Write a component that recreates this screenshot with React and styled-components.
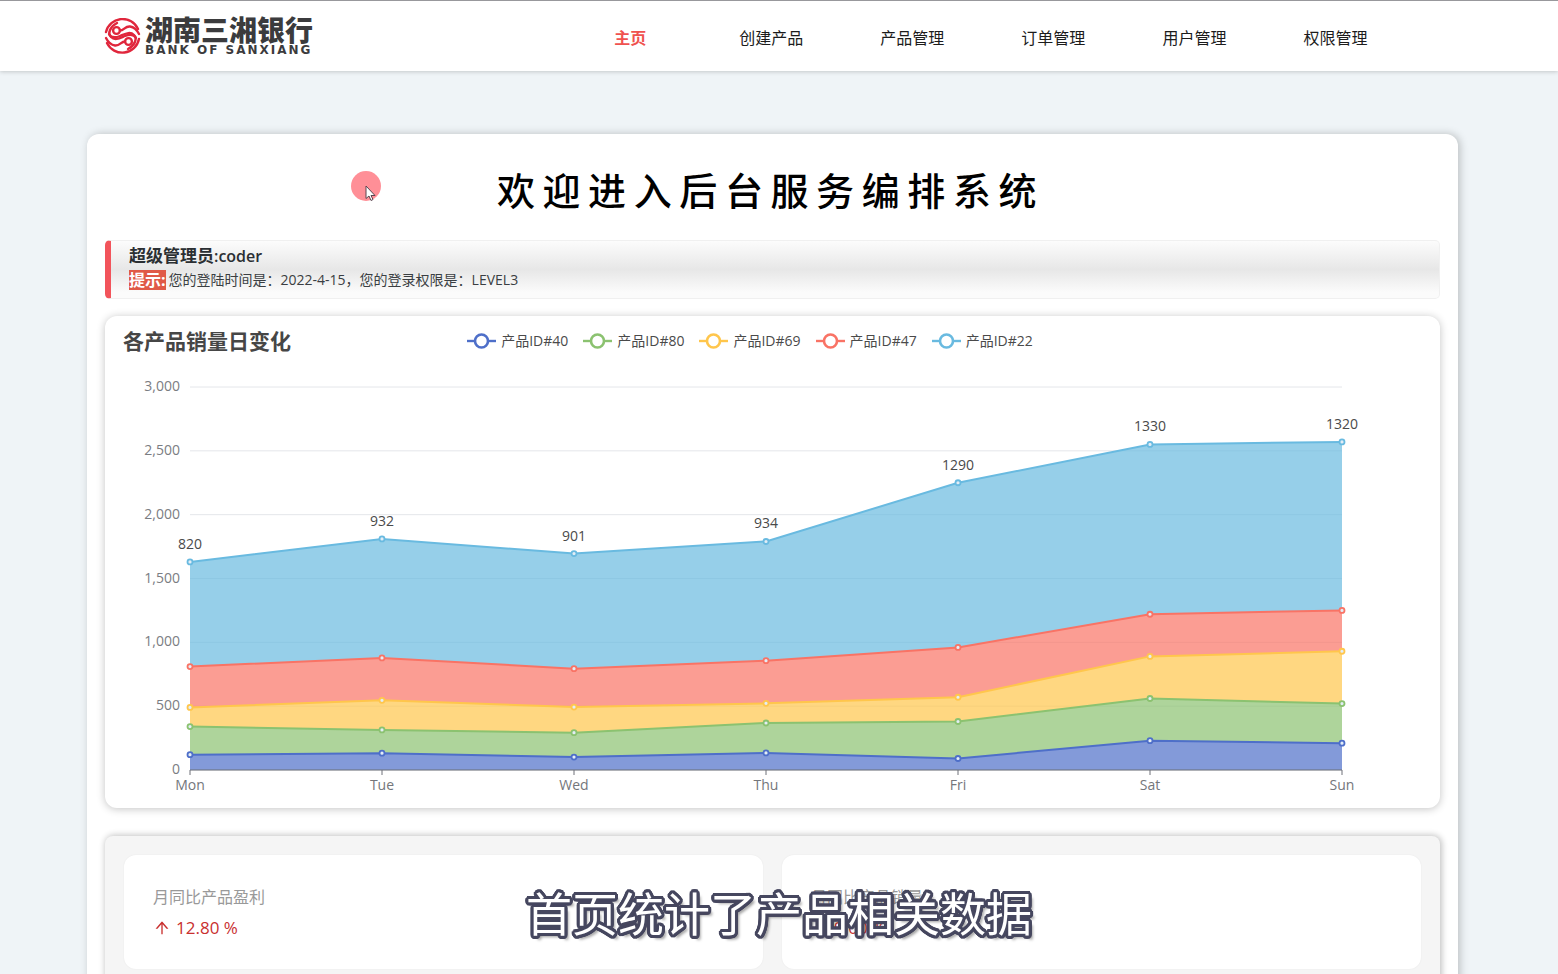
import React, { useLayoutEffect, useRef, useState } from 'react';
import styled, { createGlobalStyle } from 'styled-components';
import { AiOutlineArrowUp } from 'react-icons/ai';

const GlobalStyle = createGlobalStyle`
    * {
        box-sizing: border-box;
    }

    body {
        margin: 0;
        background-color: #eff4f7;
        font-family: 'Open Sans', 'Noto Sans CJK SC', sans-serif;
        font-size: 14px;
        color: #333;
    }
`;

const Page = styled.div`
    height: 100vh;
    overflow-y: auto;
    scrollbar-width: none;
`;

const Header = styled.header`
    display: flex;
    align-items: center;
    justify-content: space-between;
    height: 71px;
    padding: 0 152px 0 104px;
    border-top: 1px solid #98989c;
    background-color: #fff;
    box-shadow: 0 1px 4px rgba(0, 0, 0, 0.18);
`;

const Logo = styled.a`
    display: flex;
    align-items: center;
    gap: 4px;
    color: #3b3b3d;
    text-decoration: none;
`;

const LogoText = styled.span`
    display: flex;
    flex-direction: column;
`;

const LogoName = styled.span`
    font-size: 28px;
    line-height: 28px;
    font-weight: 900;
`;

const LogoSub = styled.span`
    font-family: 'DejaVu Sans', sans-serif;
    font-size: 12px;
    line-height: 12px;
    font-weight: 700;
    letter-spacing: 2px;
    white-space: nowrap;
`;

const Nav = styled.nav`
    display: grid;
    grid-template-columns: repeat(6, 1fr);
    width: 65%;
    padding-top: 3px;
`;

const NavLink = styled.a`
    font-size: 16px;
    line-height: 24px;
    text-align: center;
    text-decoration: none;
    color: ${(props) => (props.$active ? '#f0524f' : '#1c1c1c')};
    font-weight: ${(props) => (props.$active ? 700 : 400)};
`;

const Main = styled.main`
    margin: 63px 100px 40px 87px;
    padding: 28px 18px;
    border-radius: 12px;
    background-color: #fff;
    box-shadow: 2px 0 8px rgba(0, 0, 0, 0.22);
`;

const Title = styled.h1`
    margin: 0 4px 22px 0;
    font-size: 38px;
    line-height: 56px;
    font-weight: 500;
    letter-spacing: 0.2em;
    text-align: center;
    color: #000;
`;

const Notice = styled.section`
    padding: 3px 18px 6px;
    border: 1px solid #f0f0f0;
    border-left: 6px solid #f2545b;
    border-radius: 5px;
    background: linear-gradient(180deg, #fcfcfc 0%, #e7e7e7 50%, #fbfbfb 90%);
`;

const NoticeUser = styled.div`
    font-size: 17px;
    line-height: 24px;
    font-weight: 700;
    color: #2b2f33;

    span {
        font-size: 16px;
        font-weight: 600;
    }
`;

const NoticeTip = styled.div`
    display: flex;
    align-items: center;
    gap: 3px;
    line-height: 24px;
    color: #3a3e42;
`;

const Tag = styled.strong`
    font-size: 16px;
    line-height: 20px;
    color: #fff;
    background-color: #e05a47;
`;

const ChartCard = styled.section`
    margin-top: 17px;
    border-radius: 12px;
    background-color: #fff;
    box-shadow: 0 1px 8px rgba(0, 0, 0, 0.24);
`;

const ChartHead = styled.div`
    display: grid;
    grid-template-columns: 1fr auto 1fr;
    align-items: center;
    height: 50px;
    padding: 0 63px 0 18px;
`;

const ChartTitle = styled.h2`
    margin: 0;
    font-size: 21px;
    line-height: 28px;
    font-weight: 700;
    color: #464646;
`;

const Legend = styled.ul`
    display: flex;
    gap: 15px;
    margin: 0;
    padding: 0;
    list-style: none;
`;

const LegendItem = styled.li`
    display: flex;
    align-items: center;
    gap: 5px;
    line-height: 20px;
    color: #4a4a4a;
`;

const Plot = styled.svg`
    display: block;
    width: 100%;
    height: 442px;
    font-size: 14px;
`;

const Stats = styled.section`
    display: grid;
    grid-template-columns: 1fr 1fr;
    gap: 19px;
    margin-top: 28px;
    padding: 19px;
    border-radius: 8px;
    background-color: #f5f5f5;
    box-shadow: 1px 0 6px 1px rgba(0, 0, 0, 0.24);
`;

const StatCard = styled.div`
    height: 114px;
    padding: 30px 29px;
    border-radius: 12px;
    background-color: #fff;
    box-shadow: 0 0 2px rgba(0, 0, 0, 0.06);
`;

const StatLabel = styled.div`
    font-size: 16px;
    line-height: 24px;
    color: #999;
`;

const StatValue = styled.div`
    display: flex;
    align-items: center;
    gap: 5px;
    margin-top: 6px;
    font-size: 17px;
    line-height: 26px;
    color: #c9302f;
`;

// 3px outline with round corners, then a soft drop shadow
const OUTLINE = Array.from({ length: 24 }, (_, i) => {
    const a = (i * Math.PI) / 12;
    return `${(3 * Math.cos(a)).toFixed(2)}px ${(3 * Math.sin(a)).toFixed(2)}px 0 #46475f`;
}).join(', ');

const Caption = styled.div`
    position: fixed;
    left: 0;
    right: 0;
    bottom: 28px;
    font-size: 46px;
    line-height: 66px;
    text-align: center;
    color: #fff;
    text-shadow: ${OUTLINE}, 4px 4px 3px rgba(0, 0, 0, 0.4);
    pointer-events: none;
`;

const Pointer = styled.svg`
    position: fixed;
    left: 351px;
    top: 171px;
    width: 30px;
    height: 30px;
    pointer-events: none;
`;

const NAV = ['主页', '创建产品', '产品管理', '订单管理', '用户管理', '权限管理'];
const DAYS = ['Mon', 'Tue', 'Wed', 'Thu', 'Fri', 'Sat', 'Sun'];
const TICKS = [0, 500, 1000, 1500, 2000, 2500, 3000];

const SERIES = [
    { name: '产品ID#40', color: '#4e6fc9', data: [120, 132, 101, 134, 90, 230, 210] },
    { name: '产品ID#80', color: '#8bc270', data: [220, 182, 191, 234, 290, 330, 310] },
    { name: '产品ID#69', color: '#ffc64c', data: [150, 232, 201, 154, 190, 330, 410] },
    { name: '产品ID#47', color: '#f97365', data: [320, 332, 301, 334, 390, 330, 320] },
    { name: '产品ID#22', color: '#69bae0', data: [820, 932, 901, 934, 1290, 1330, 1320] },
];

const STATS = [
    { label: '月同比产品盈利', value: '12.80 %' },
    { label: '月同比产品销量', value: '9.00 %' },
];

// grid margins inside the plot
const GRID = { left: 85, right: 98, top: 21, bottom: 38, height: 442 };

// running totals, one list per series
const STACKS = SERIES.reduce((acc, s, i) => {
    const below = i ? acc[i - 1] : DAYS.map(() => 0);
    return [...acc, s.data.map((v, d) => v + below[d])];
}, []);

const LogoMark = () => (
    <svg width="37" height="36" viewBox="0 0 37 36" fill="none" stroke="#e0263c" strokeWidth="2.4" strokeLinecap="round">
        <path d="M2 14A17 17 0 0 1 34 11" />
        <path d="M35 21A17 17 0 0 1 3 25" />
        <circle cx="12.500" cy="12.500" r="3.400" />
        <circle cx="24.500" cy="23.500" r="3.400" />
        <path d="M16 12.500C20 12.500 21 8 26 8.500C30 9 33 12 35 16" />
        <path d="M21 23.500C17 23.500 16 28 11 27.500C7 27 4 24 2 20" />
        <path d="M5 16C7 20 11 20 16 18S26 13 30 17S30 28 24 31" />
        <path d="M32 20C30 16 26 16 21 18S11 23 7 19S7 8 13 5" />
    </svg>
);

const AreaChart = () => {
    const ref = useRef(null);
    const [width, setWidth] = useState(1335);

    useLayoutEffect(() => {
        const update = () => setWidth(ref.current.getBoundingClientRect().width);
        update();
        window.addEventListener('resize', update);
        return () => window.removeEventListener('resize', update);
    }, []);

    const bottom = GRID.height - GRID.bottom;
    const right = width - GRID.right;
    const x = (i) => GRID.left + (i * (right - GRID.left)) / (DAYS.length - 1);
    const y = (v) => bottom - (v * (bottom - GRID.top)) / 3000;
    const points = (list) => list.map((v, i) => `${x(i)},${y(v)}`);

    return (
        <Plot ref={ref} role="img" aria-label="各产品销量日变化">
            {TICKS.map((t) => (
                <g key={t}>
                    <line x1={GRID.left} x2={right} y1={y(t)} y2={y(t)} stroke="#e4e6ea" />
                    <text x={GRID.left - 10} y={y(t) + 4} textAnchor="end" fill="#7b7d82">
                        {t.toLocaleString('en-US')}
                    </text>
                </g>
            ))}
            {SERIES.map((s, i) => {
                const base = i ? STACKS[i - 1] : DAYS.map(() => 0);
                const area = [...points(STACKS[i]), ...points(base).reverse()].join(' ');
                return <polygon key={s.name} points={area} fill={s.color} fillOpacity="0.7" />;
            })}
            <line x1={GRID.left} x2={right} y1={bottom} y2={bottom} stroke="#6e7079" />
            {DAYS.map((d, i) => (
                <g key={d}>
                    <line x1={x(i)} x2={x(i)} y1={bottom} y2={bottom + 5} stroke="#6e7079" />
                    <text x={x(i)} y={bottom + 20} textAnchor="middle" fill="#74767b">{d}</text>
                </g>
            ))}
            {SERIES.map((s, i) => (
                <g key={s.name} stroke={s.color}>
                    <polyline points={points(STACKS[i]).join(' ')} fill="none" strokeWidth="2" />
                    {STACKS[i].map((v, d) => (
                        <circle key={d} cx={x(d)} cy={y(v)} r="2.5" fill="#e3edf6" strokeWidth="1.8" />
                    ))}
                </g>
            ))}
            {STACKS[4].map((v, d) => (
                <text key={d} x={x(d)} y={y(v) - 13} textAnchor="middle" fill="#4a4a4a">
                    {SERIES[4].data[d]}
                </text>
            ))}
        </Plot>
    );
};

const App = () => {
    const [active, setActive] = useState(0);

    return (
        <Page>
            <GlobalStyle />
            <Header>
                <Logo href="#home">
                    <LogoMark />
                    <LogoText>
                        <LogoName>湖南三湘银行</LogoName>
                        <LogoSub>BANK OF SANXIANG</LogoSub>
                    </LogoText>
                </Logo>
                <Nav>
                    {NAV.map((item, i) => (
                        <NavLink key={item} href={`#${i}`} $active={i === active} onClick={() => setActive(i)}>
                            {item}
                        </NavLink>
                    ))}
                </Nav>
            </Header>
            <Main>
                <Title>欢迎进入后台服务编排系统</Title>
                <Notice>
                    <NoticeUser>超级管理员<span>:coder</span></NoticeUser>
                    <NoticeTip>
                        <Tag>提示:</Tag>
                        您的登陆时间是：2022-4-15，您的登录权限是：LEVEL3
                    </NoticeTip>
                </Notice>
                <ChartCard>
                    <ChartHead>
                        <ChartTitle>各产品销量日变化</ChartTitle>
                        <Legend>
                            {SERIES.map((s) => (
                                <LegendItem key={s.name}>
                                    <svg width="29" height="18" fill="#fff" stroke={s.color}>
                                        <line x1="0" x2="29" y1="9" y2="9" strokeWidth="2.4" />
                                        <circle cx="14.500" cy="9" r="6.500" strokeWidth="2.600" />
                                    </svg>
                                    {s.name}
                                </LegendItem>
                            ))}
                        </Legend>
                    </ChartHead>
                    <AreaChart />
                </ChartCard>
                <Stats>
                    {STATS.map((s) => (
                        <StatCard key={s.label}>
                            <StatLabel>{s.label}</StatLabel>
                            <StatValue>
                                <AiOutlineArrowUp size={18} />
                                {s.value}
                            </StatValue>
                        </StatCard>
                    ))}
                </Stats>
            </Main>
            <Pointer viewBox="0 0 30 30">
                <circle cx="15" cy="15" r="15" fill="#ff8f97" />
                <path d="M15 15V27.500L18 25L20 29.500L22 28.500L20 24.500H24Z" fill="#fff" stroke="#5b4650" />
            </Pointer>
            <Caption>首页统计了产品相关数据</Caption>
        </Page>
    );
};

export default App;
